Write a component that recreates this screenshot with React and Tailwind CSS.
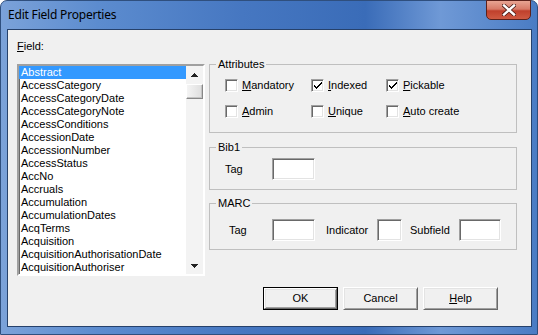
import React from "react";

const fields = [
  "Abstract",
  "AccessCategory",
  "AccessCategoryDate",
  "AccessCategoryNote",
  "AccessConditions",
  "AccessionDate",
  "AccessionNumber",
  "AccessStatus",
  "AccNo",
  "Accruals",
  "Accumulation",
  "AccumulationDates",
  "AcqTerms",
  "Acquisition",
  "AcquisitionAuthorisationDate",
  "AcquisitionAuthoriser",
];

const sunken =
  "border border-t-[#a0a0a0] border-l-[#a0a0a0] border-b-white border-r-white shadow-[inset_1px_1px_0_#696969,inset_-1px_-1px_0_#e3e3e3]";

const Key = ({ children }) => <span className="underline underline-offset-[1px]">{children}</span>;

const Check = ({ checked, label }) => (
  <div className="flex items-center gap-[4px] h-[13px]">
    <span className={`w-[13px] h-[13px] bg-white flex items-center justify-center shrink-0 ${sunken}`}>
      {checked && (
        <svg width="9" height="9" viewBox="0 0 9 9" shapeRendering="crispEdges">
          <path d="M1 3v3h1v1h1v1h1v-1h1v-1h1v-1h1v-1h1v-1h1v-2h-1v1h-1v1h-1v1h-1v1h-1v1h-1v-1h-1v-1h-1v-1z" fill="#000" />
        </svg>
      )}
    </span>
    <span className="leading-[13px]">{label}</span>
  </div>
);

const Field = ({ w }) => <div className={`h-[22px] bg-white ${sunken} ${w}`} />;

const Group = ({ title, className, children }) => (
  <fieldset className={`border border-[#bfbfbf] p-0 ${className}`}>
    <legend className="ml-[6px] px-[2px] leading-[13px] font-normal">{title}</legend>
    {children}
  </fieldset>
);

const Btn = ({ children, def }) => (
  <div className={`w-[75px] h-[23px] ${def ? "border border-black" : ""}`}>
    <div className="w-full h-full bg-[#f0f0f0] flex items-center justify-center border border-t-white border-l-white border-b-[#696969] border-r-[#696969] shadow-[inset_1px_1px_0_#e3e3e3,inset_-1px_-1px_0_#a0a0a0]">
      {children}
    </div>
  </div>
);

export default function App() {
  return (
    <div className="w-[538px] h-[335px] font-['Liberation_Sans',Arial,sans-serif] text-[11px] text-black">
      <div className="w-full h-full rounded-t-[7px] border border-[#2f4f7e] bg-[linear-gradient(to_right,#7ba2d9_0%,#5c8ccf_18%,#4677c1_45%,#3a6cb8_68%,#6f99d6_82%,#4a7cc4_100%)] flex flex-col">
        {/* title bar */}
        <div className="h-[28px] flex items-start justify-between shrink-0">
          <div className="pl-[7px] pt-[6px] font-['Noto_Sans',sans-serif] text-[12px] leading-[16px] text-black tracking-[-0.2px]">
            Edit Field Properties
          </div>
          <div className="mr-[6px] w-[45px] h-[20px] -mt-px rounded-b-[5px] border border-[#5c211b] bg-[linear-gradient(to_bottom,#e8a493_0%,#d77a67_45%,#c0402c_55%,#cf5a42_100%)] flex items-center justify-center">
            <svg width="14" height="12" viewBox="0 0 14 12">
              <path d="M2 1.5 L12 10.5 M12 1.5 L2 10.5" stroke="#4a1a14" strokeWidth="4" strokeLinecap="square" />
              <path d="M2 1.5 L12 10.5 M12 1.5 L2 10.5" stroke="#fff" strokeWidth="2.4" strokeLinecap="square" />
            </svg>
          </div>
        </div>

        {/* client area */}
        <div className="flex-1 ml-[6px] mr-[5px] mb-[7px] border border-[#26416b] bg-[#f0f0f0] flex">
          {/* left column */}
          <div className="ml-[9px] w-[188px] flex flex-col">
            <div className="mt-[10px] leading-[13px]">
              <Key>F</Key>ield:
            </div>
            <div className="mt-[11px] h-[212px] bg-white flex border-2 border-t-[#a0a0a0] border-l-[#a0a0a0] border-b-white border-r-white shadow-[inset_1px_1px_0_#696969]">
              <div className="flex-1 flex flex-col">
                {fields.map((f, i) => (
                  <div
                    key={f}
                    className={`h-[13px] leading-[13px] pl-[2px] whitespace-nowrap ${i === 0 ? "bg-[#3399ff] text-white" : ""}`}
                  >
                    {f}
                  </div>
                ))}
              </div>
              <div className="w-[17px] bg-[#f3f3f3] flex flex-col">
                <div className="h-[17px] flex items-center justify-center">
                  <svg width="7" height="4" viewBox="0 0 7 4" shapeRendering="crispEdges">
                    <path d="M3 0h1v1h1v1h1v1h1v1h-7v-1h1v-1h1v-1h1z" fill="#222" />
                  </svg>
                </div>
                <div className="h-[15px] mt-[1px] border border-t-white border-l-white border-b-[#888] border-r-[#888] bg-[linear-gradient(to_right,#f4f4f4,#dedede)] shadow-[inset_-1px_-1px_0_#c4c4c4]" />
                <div className="flex-1" />
                <div className="h-[17px] flex items-center justify-center">
                  <svg width="7" height="4" viewBox="0 0 7 4" shapeRendering="crispEdges">
                    <path d="M0 0h7v1h-1v1h-1v1h-1v1h-1v-1h-1v-1h-1v-1h-1z" fill="#222" />
                  </svg>
                </div>
              </div>
            </div>
          </div>

          {/* right column */}
          <div className="ml-[4px] w-[308px] flex flex-col">
            <Group title="Attributes" className="mt-[28px]">
              <div className="px-[15px] pt-[8px] pb-[14px] grid grid-cols-[86px_75px_1fr] gap-y-[13px]">
                <Check label={<><Key>M</Key>andatory</>} />
                <Check checked label={<><Key>I</Key>ndexed</>} />
                <Check checked label={<><Key>P</Key>ickable</>} />
                <Check label={<><Key>A</Key>dmin</>} />
                <Check label={<><Key>U</Key>nique</>} />
                <Check label={<><Key>A</Key>uto create</>} />
              </div>
            </Group>

            <Group title="Bib1" className="mt-[8px]">
              <div className="pl-[15px] pt-[4px] pb-[9px] flex items-center">
                <span className="w-[47px]">Tag</span>
                <Field w="w-[43px]" />
              </div>
            </Group>

            <Group title="MARC" className="mt-[7px]">
              <div className="pl-[19px] pt-[9px] pb-[8px] flex items-center">
                <span className="w-[43px]">Tag</span>
                <Field w="w-[43px]" />
                <span className="ml-[11px] w-[51px]">Indicator</span>
                <Field w="w-[25px]" />
                <span className="ml-[8px] w-[49px]">Subfield</span>
                <Field w="w-[42px]" />
              </div>
            </Group>

            <div className="mt-[37px] ml-[54px] flex gap-[5px]">
              <Btn def>OK</Btn>
              <Btn>Cancel</Btn>
              <Btn>
                <span>
                  <Key>H</Key>elp
                </span>
              </Btn>
            </div>
          </div>
        </div>
      </div>
    </div>
  );
}
